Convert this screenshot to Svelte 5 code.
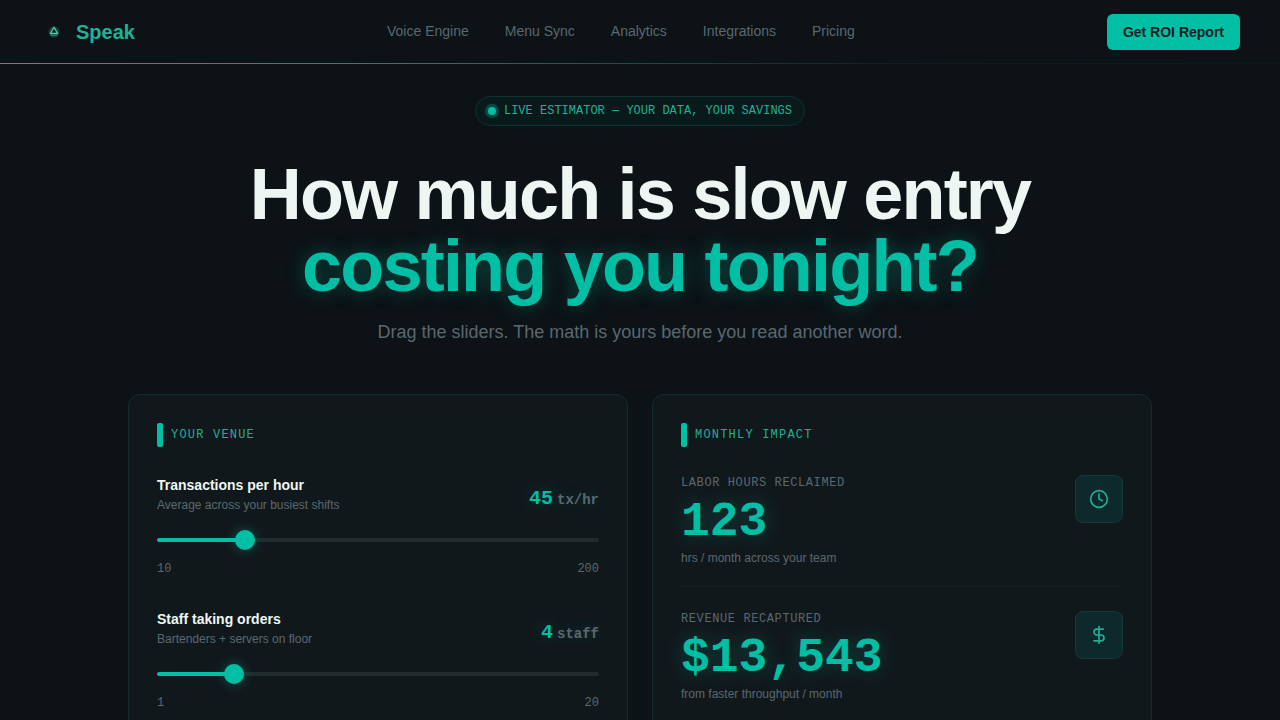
<script lang="ts">
  interface Slider {
    id: string;
    label: string;
    hint: string;
    unit: string;
    min: number;
    max: number;
    value: number;
  }

  const links = ['Voice Engine', 'Menu Sync', 'Analytics', 'Integrations', 'Pricing'];

  let sliders = $state<Slider[]>([
    {
      id: 'tx',
      label: 'Transactions per hour',
      hint: 'Average across your busiest shifts',
      unit: 'tx/hr',
      min: 10,
      max: 200,
      value: 45
    },
    {
      id: 'staff',
      label: 'Staff taking orders',
      hint: 'Bartenders + servers on floor',
      unit: 'staff',
      min: 1,
      max: 20,
      value: 4
    }
  ]);

  // both results scale with venue volume
  let load = $derived((sliders[0].value * sliders[1].value) / 180);
  let hours = $derived(Math.round(123 * load));
  let revenue = $derived(Math.round(13543 * load));

  function percent(s: Slider) {
    return ((s.value - s.min) / (s.max - s.min)) * 100;
  }
</script>

<div class="page">
  <header class="header">
    <a class="brand" href="#top">
      <svg class="brand__mark" viewBox="0 0 28 28" aria-hidden="true">
        <circle cx="14" cy="14" r="5.500" fill="#17423b" />
        <path d="M14 9.200l3.600 6.300h-7.200z" fill="#10211f" stroke="#58c9a8" stroke-width="1.300" stroke-linejoin="round" />
        <path d="M11.500 17.500h5" stroke="#2d7566" stroke-width="1.200" stroke-linecap="round" />
      </svg>
      <span>Speak</span>
    </a>
    <nav class="nav">
      {#each links as link}
        <a href="#{link.toLowerCase().replace(' ', '-')}">{link}</a>
      {/each}
    </nav>
    <button class="cta" type="button">Get ROI Report</button>
  </header>

  <main class="main" id="top">
    <section class="hero">
      <div class="pill">
        <span class="pill__dot"></span>
        <span>LIVE ESTIMATOR — YOUR DATA, YOUR SAVINGS</span>
      </div>
      <h1>How much is slow entry<br /><span class="glow">costing you tonight?</span></h1>
      <p>Drag the sliders. The math is yours before you read another word.</p>
    </section>

    <div class="cards">
      <section class="card">
        <h2 class="card__title">YOUR VENUE</h2>
        {#each sliders as s (s.id)}
          <div class="field">
            <div class="field__top">
              <div>
                <label class="field__label" for={s.id}>{s.label}</label>
                <div class="field__hint">{s.hint}</div>
              </div>
              <output class="field__value" for={s.id}>
                {s.value}<span class="field__unit">{s.unit}</span>
              </output>
            </div>
            <input
              id={s.id}
              class="range"
              type="range"
              min={s.min}
              max={s.max}
              bind:value={s.value}
              style="--fill: {percent(s)}%"
            />
            <div class="field__limits">
              <span>{s.min}</span>
              <span>{s.max}</span>
            </div>
          </div>
        {/each}
      </section>

      <section class="card">
        <h2 class="card__title">MONTHLY IMPACT</h2>
        <div class="stat">
          <div>
            <div class="stat__label">LABOR HOURS RECLAIMED</div>
            <div class="stat__value">{hours.toLocaleString('en-US')}</div>
            <div class="stat__note">hrs / month across your team</div>
          </div>
          <div class="stat__icon">
            <svg viewBox="0 0 24 24" aria-hidden="true">
              <circle cx="12" cy="12" r="10" />
              <path d="M12 6v6l4 2" />
            </svg>
          </div>
        </div>
        <div class="stat">
          <div>
            <div class="stat__label">REVENUE RECAPTURED</div>
            <div class="stat__value">${revenue.toLocaleString('en-US')}</div>
            <div class="stat__note">from faster throughput / month</div>
          </div>
          <div class="stat__icon">
            <svg viewBox="0 0 24 24" aria-hidden="true">
              <path d="M12 2v20" />
              <path d="M17 5H9.500a3.500 3.500 0 0 0 0 7h5a3.500 3.500 0 0 1 0 7H6" />
            </svg>
          </div>
        </div>
      </section>
    </div>
  </main>
</div>

<style>
  :global(body) {
    margin: 0;
    background: #0c1216;
  }

  .page {
    --teal: #00bfa5;
    --muted: #5a6870;
    --mono: 'Liberation Mono', monospace;
    height: 100vh;
    overflow: hidden;
    color: #eef6f3;
    background: #0c1216;
    font-family: 'Liberation Sans', sans-serif;
  }

  .header {
    display: flex;
    align-items: center;
    justify-content: space-between;
    height: 64px;
    padding: 0 40px;
    background: linear-gradient(90deg, #1fa693, #178577 30%, #10433f 55%, #0d1f20 70%, #0d191b) bottom / 100% 1px no-repeat;
  }

  .brand {
    display: flex;
    align-items: center;
    gap: 8px;
    color: #1fb297;
    font-size: 20px;
    font-weight: 700;
    line-height: 24px;
    text-decoration: none;
  }

  .brand__mark {
    width: 28px;
    height: 28px;
  }

  .nav {
    display: flex;
    gap: 36px;
  }

  .nav a {
    padding-bottom: 2px;
    color: var(--muted);
    font-size: 14px;
    text-decoration: none;
  }

  .cta {
    height: 36px;
    padding: 0 16px;
    border: 0;
    border-radius: 6px;
    background: var(--teal);
    color: #0d1f22;
    font: 700 14px 'Liberation Sans', sans-serif;
    cursor: pointer;
  }

  .main {
    max-width: 1024px;
    margin: 0 auto;
    padding: 32px 24px 64px;
  }

  .hero {
    display: flex;
    flex-direction: column;
    align-items: center;
    text-align: center;
  }

  .pill {
    display: flex;
    align-items: center;
    gap: 8px;
    padding: 0 12px;
    border: 1px solid #0c332f;
    border-radius: 15px;
    background: #0a1a1b;
    color: #22ae94;
    font-family: var(--mono);
    font-size: 12px;
    line-height: 28px;
  }

  .pill__dot {
    width: 8px;
    height: 8px;
    border-radius: 50%;
    background: var(--teal);
    box-shadow: 0 0 0 3px #064a43, 0 0 6px #00bfa566;
  }

  h1 {
    margin: 32px 0 16px;
    font-size: 72px;
    font-weight: 700;
    line-height: 72px;
    letter-spacing: -0.025em;
  }

  .glow {
    color: var(--teal);
    text-shadow: 0 0 20px #00bfa559;
  }

  .hero p {
    margin: 0;
    color: var(--muted);
    font-size: 18px;
    line-height: 28px;
  }

  .cards {
    display: grid;
    grid-template-columns: 1fr 1fr;
    gap: 24px;
    margin-top: 48px;
  }

  .card {
    padding: 28px;
    border: 1px solid #102e2d;
    border-radius: 12px;
    background: #11181c;
  }

  .card__title {
    display: flex;
    align-items: center;
    gap: 8px;
    margin: 0 0 28px;
    color: #22ae94;
    font-family: var(--mono);
    font-size: 12px;
    font-weight: 400;
    line-height: 24px;
    letter-spacing: 0.1em;
  }

  .card__title::before {
    content: '';
    width: 6px;
    height: 24px;
    border-radius: 2px;
    background: var(--teal);
  }

  .field {
    margin-bottom: 32px;
  }

  .field__top {
    display: flex;
    align-items: flex-end;
    justify-content: space-between;
    margin-bottom: 16px;
  }

  .field__label {
    display: block;
    margin-bottom: 2px;
    font-size: 14px;
    font-weight: 700;
    line-height: 20px;
  }

  .field__hint {
    color: var(--muted);
    font-size: 12px;
    line-height: 17px;
  }

  .field__value {
    color: var(--teal);
    font-family: var(--mono);
    font-size: 20px;
    font-weight: 700;
    line-height: 28px;
    text-shadow: 0 0 16px #00bfa54d;
  }

  .field__unit {
    margin-left: 4px;
    color: var(--muted);
    font-size: 14px;
  }

  .range {
    display: block;
    width: 100%;
    height: 20px;
    margin: 0;
    background: transparent;
    appearance: none;
    cursor: pointer;
  }

  .range::-webkit-slider-runnable-track {
    height: 4px;
    border-radius: 2px;
    background: linear-gradient(90deg, var(--teal) var(--fill), #222b2e var(--fill));
  }

  .range::-webkit-slider-thumb {
    width: 20px;
    height: 20px;
    margin-top: -8px;
    border-radius: 50%;
    background: var(--teal);
    box-shadow: 0 0 12px #00bfa566;
    appearance: none;
  }

  .field__limits {
    display: flex;
    justify-content: space-between;
    margin-top: 11px;
    color: var(--muted);
    font-family: var(--mono);
    font-size: 12px;
    line-height: 16px;
  }

  .stat {
    display: flex;
    align-items: flex-start;
    justify-content: space-between;
    margin-bottom: 24px;
    padding-bottom: 18px;
    border-bottom: 1px solid #162022;
  }

  .stat__label {
    color: var(--muted);
    font-family: var(--mono);
    font-size: 12px;
    line-height: 16px;
    letter-spacing: 0.05em;
  }

  .stat__value {
    margin-top: 5px;
    color: var(--teal);
    font-family: var(--mono);
    font-size: 48px;
    font-weight: 700;
    line-height: 52px;
    text-shadow: 0 0 20px #00bfa54d;
  }

  .stat__note {
    color: var(--muted);
    font-size: 12px;
    line-height: 20px;
  }

  .stat__icon {
    display: flex;
    align-items: center;
    justify-content: center;
    width: 46px;
    height: 46px;
    border: 1px solid #123a37;
    border-radius: 8px;
    background: #0e292b;
  }

  .stat__icon svg {
    width: 20px;
    height: 20px;
    fill: none;
    stroke: #1fae94;
    stroke-width: 2;
    stroke-linecap: round;
    stroke-linejoin: round;
  }
</style>
